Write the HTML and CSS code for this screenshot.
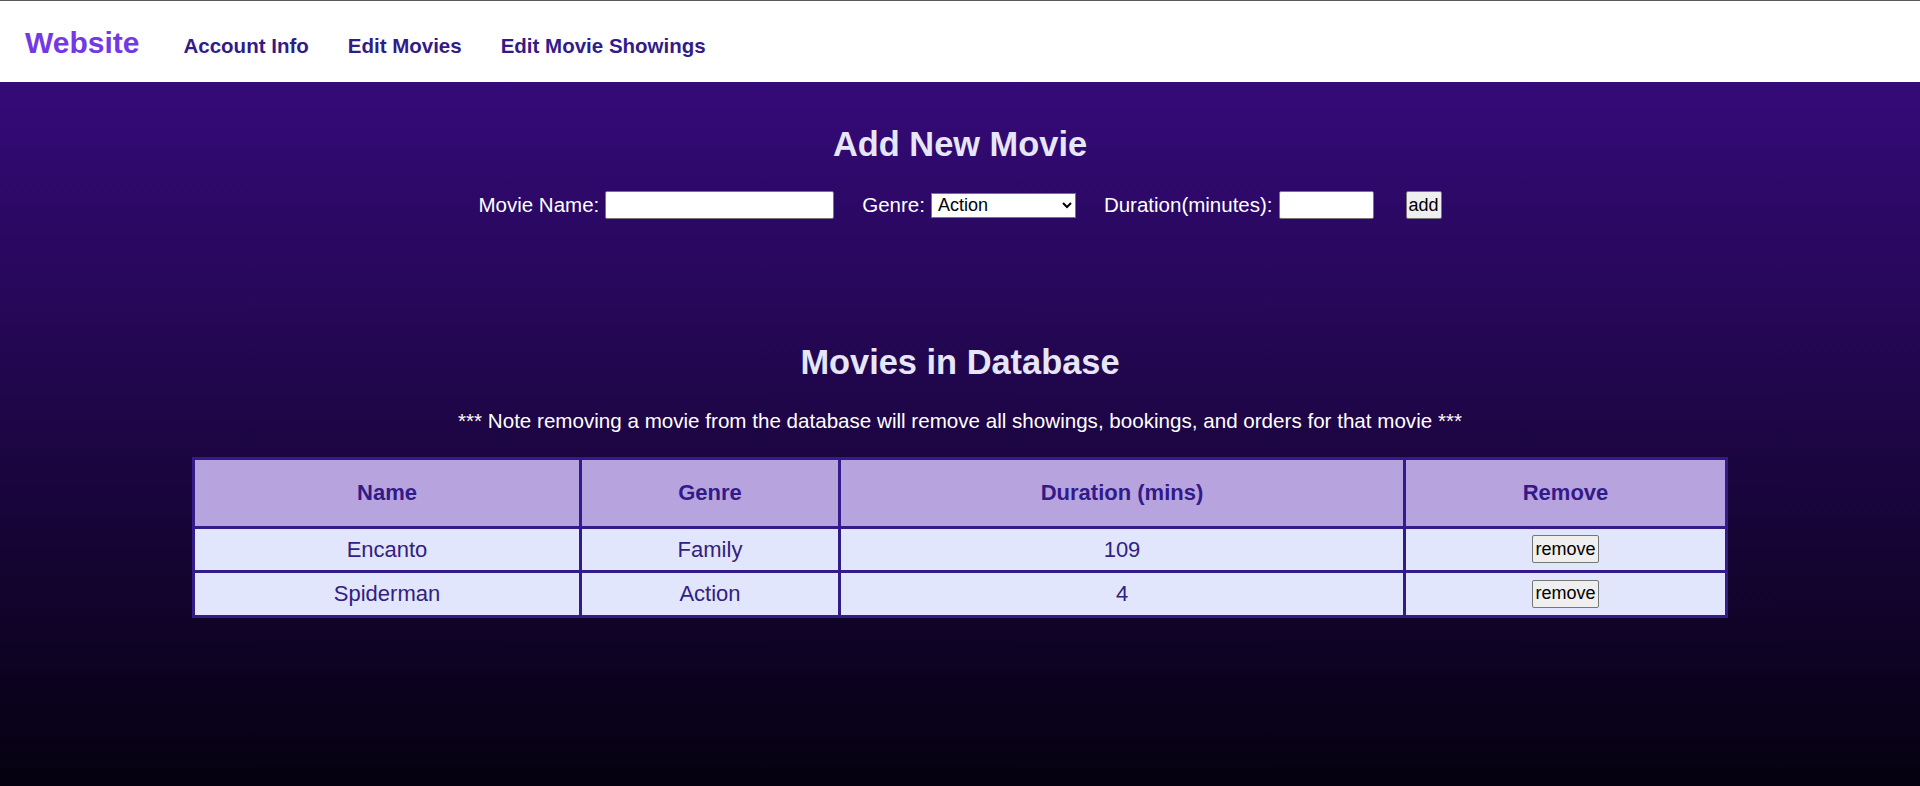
FILE: index.html
```html
<!DOCTYPE html>
<html lang="en">
<head>
<meta charset="utf-8">
<title>Edit Movies</title>
<link rel="stylesheet" href="styles.css">
</head>
<body>
<nav class="navbar">
  <a class="brand" href="#">Website</a>
  <a class="nav-link" href="#">Account Info</a>
  <a class="nav-link" href="#">Edit Movies</a>
  <a class="nav-link" href="#">Edit Movie Showings</a>
</nav>
<main class="content">
  <h1 class="title">Add New Movie</h1>
  <form class="add-form">
    <div class="field">
      <label class="label" for="name">Movie Name:</label>
      <input class="text-input name-input" id="name" type="text">
    </div>
    <div class="field">
      <label class="label" for="genre">Genre:</label>
      <select class="genre-select" id="genre">
        <option>Action</option>
        <option>Family</option>
        <option>Comedy</option>
        <option>Drama</option>
      </select>
    </div>
    <div class="field">
      <label class="label" for="dur">Duration(minutes):</label>
      <input class="text-input dur-input" id="dur" type="text">
    </div>
    <button class="btn add-btn" type="button">add</button>
  </form>

  <h1 class="title second">Movies in Database</h1>
  <p class="note">*** Note removing a movie from the database will remove all showings, bookings, and orders for that movie ***</p>

  <table class="movies">
    <colgroup>
      <col class="c-name">
      <col class="c-genre">
      <col class="c-dur">
      <col class="c-rem">
    </colgroup>
    <thead>
      <tr><th>Name</th><th>Genre</th><th>Duration (mins)</th><th>Remove</th></tr>
    </thead>
    <tbody>
      <tr><td>Encanto</td><td>Family</td><td>109</td><td><button class="btn rm-btn" type="button">remove</button></td></tr>
      <tr><td>Spiderman</td><td>Action</td><td>4</td><td><button class="btn rm-btn" type="button">remove</button></td></tr>
    </tbody>
  </table>
</main>
</body>
</html>
```
FILE: styles.css
```css
* { box-sizing: border-box; }
html, body { margin: 0; padding: 0; }
body {
  font-family: "Liberation Sans", Arial, sans-serif;
  background: #050110;
  min-height: 786px;
}
.navbar {
  display: flex;
  align-items: baseline;
  gap: 39px;
  height: 82px;
  padding: 25px 0 0 25px;
  background: #ffffff;
  border-top: 1px solid #5a5a5a;
}
.brand {
  font-size: 30px;
  font-weight: bold;
  color: #7339e5;
  text-decoration: none;
  margin-right: 5px;
}
.nav-link {
  font-size: 20.5px;
  font-weight: bold;
  color: #331b88;
  text-decoration: none;
}
.content {
  min-height: 704px;
  padding-top: 42px;
  background: linear-gradient(to bottom, #350a79 0%, #050110 100%);
  display: flex;
  flex-direction: column;
  align-items: center;
}
.title {
  margin: 0;
  font-size: 34.4px;
  line-height: 40px;
  font-weight: bold;
  color: #e6e6fa;
  text-align: center;
}
.title.second { margin-top: 122.5px; }
.add-form {
  margin-top: 27px;
  display: flex;
  align-items: center;
  height: 28px;
}
.field {
  display: flex;
  align-items: center;
  gap: 6px;
  margin-right: 28px;
}
.field:nth-child(3) { margin-right: 32px; }
.label {
  font-size: 20.5px;
  color: #ffffff;
}
.text-input {
  height: 28px;
  border: 1px solid #767676;
  border-radius: 2px;
  background: #fff;
  padding: 1px 2px;
  font-size: 18px;
  font-family: "Liberation Sans", Arial, sans-serif;
}
.name-input { width: 229px; }
.dur-input { width: 95px; }
.genre-select {
  width: 145px;
  height: 25px;
  font-size: 18px;
  font-family: "Liberation Sans", Arial, sans-serif;
  border: 1px solid #767676;
  border-radius: 0;
  background: #fff;
  color: #000;
  padding: 0 2px;
}
.btn {
  height: 28px;
  padding: 0 2px;
  font-size: 18px;
  font-family: "Liberation Sans", Arial, sans-serif;
  color: #000;
  background: #efefef;
  border: 1px solid #767676;
  border-radius: 2px;
}
.add-btn { width: 36px; }
.rm-btn { width: 67px; }
.note {
  margin: 27.7px 0 0;
  font-size: 20.6px;
  line-height: 24px;
  color: #ffffff;
  text-align: center;
}
.movies {
  margin-top: 23.8px;
  width: 1536px;
  border-collapse: collapse;
  table-layout: fixed;
  border: 3px solid #341b8a;
}
.c-name { width: 387px; }
.c-genre { width: 259px; }
.c-dur { width: 565px; }
.movies th, .movies td {
  border: 3px solid #341b8a;
  text-align: center;
  vertical-align: middle;
  font-size: 22px;
  line-height: 25px;
}
.movies th {
  background: #b7a3de;
  color: #321a88;
  font-weight: bold;
  padding: 20.5px 8px;
}
.movies td {
  background: #e1e6fc;
  color: #33207f;
  padding: 6px 8px 7px;
}
```
